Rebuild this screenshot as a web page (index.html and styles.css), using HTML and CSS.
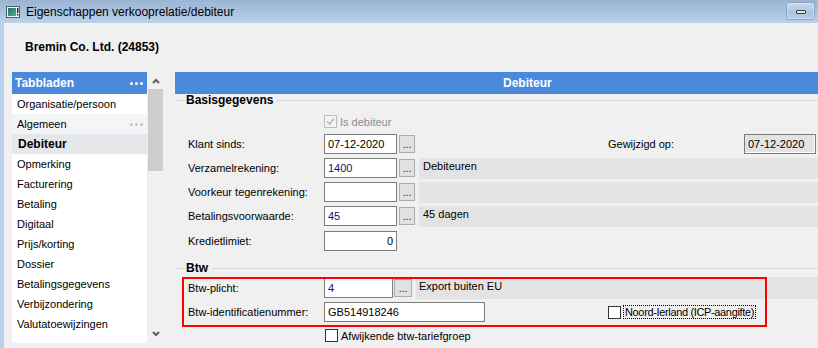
FILE: index.html
```html
<!DOCTYPE html>
<html>
<head>
<meta charset="utf-8">
<link rel="stylesheet" href="styles.css">
</head>
<body>
<div class="titlebar">
  <svg class="appicon" width="14" height="12" viewBox="0 0 14 12">
    <rect x="0.5" y="0.5" width="13" height="11" fill="#f4f4f4" stroke="#5a5a5a"/>
    <rect x="2" y="2" width="8" height="8" fill="url(#g)"/>
    <defs><linearGradient id="g" x1="0" y1="0" x2="1" y2="1"><stop offset="0" stop-color="#1f6e8c"/><stop offset="1" stop-color="#4db36a"/></linearGradient></defs>
    <rect x="11" y="2" width="1.4" height="5" fill="#222"/>
    <rect x="11" y="8" width="1.4" height="1.5" fill="#222"/>
  </svg>
  <span class="title">Eigenschappen verkooprelatie/debiteur</span>
  <div class="minbtn"><span class="minbar"></span></div>
</div>
<div class="client">
  <div class="company">Bremin Co. Ltd. (24853)</div>
  <div class="main">
    <div class="sidebar">
      <div class="sb-head">
        <span>Tabbladen</span>
        <svg class="dots" width="13" height="3" viewBox="0 0 13 3"><circle cx="1.5" cy="1.5" r="1.5" fill="#fff"/><circle cx="6.5" cy="1.5" r="1.5" fill="#fff"/><circle cx="11.5" cy="1.5" r="1.5" fill="#fff"/></svg>
      </div>
      <ul class="tabs">
        <li>Organisatie/persoon</li>
        <li class="hover">Algemeen<svg class="dots" width="13" height="3" viewBox="0 0 13 3"><circle cx="1.5" cy="1.5" r="1.5" fill="#c4c6c9"/><circle cx="6.5" cy="1.5" r="1.5" fill="#c4c6c9"/><circle cx="11.5" cy="1.5" r="1.5" fill="#c4c6c9"/></svg></li>
        <li class="active">Debiteur</li>
        <li>Opmerking</li>
        <li>Facturering</li>
        <li>Betaling</li>
        <li>Digitaal</li>
        <li>Prijs/korting</li>
        <li>Dossier</li>
        <li>Betalingsgegevens</li>
        <li>Verbijzondering</li>
        <li>Valutatoewijzingen</li>
      </ul>
    </div>
    <div class="scroll">
      <svg class="chev up" width="8" height="6" viewBox="0 0 8 6"><polyline points="1,5 4,2 7,5" fill="none" stroke="#5f5f5f" stroke-width="2"/></svg>
      <div class="thumb"></div>
      <svg class="chev down" width="8" height="6" viewBox="0 0 8 6"><polyline points="1,1 4,4 7,1" fill="none" stroke="#5f5f5f" stroke-width="2"/></svg>
    </div>
    <div class="content">
      <div class="content-head">Debiteur</div>
      <div class="group-title"><span>Basisgegevens</span></div>
      <div class="form">
        <div class="row row-check">
          <span class="label"></span>
          <span class="check disabled"><svg width="11" height="11" viewBox="0 0 11 11"><polyline points="2,5.5 4.5,8 9,2.5" fill="none" stroke="#b8b8b8" stroke-width="1.6"/></svg></span>
          <span class="check-text disabled-text">Is debiteur</span>
        </div>
        <div class="row row-klant">
          <span class="label">Klant sinds:</span>
          <span class="input w73">07-12-2020</span>
          <span class="btn">...</span>
          <span class="label label2">Gewijzigd op:</span>
          <span class="input readonly w72">07-12-2020</span>
        </div>
        <div class="row">
          <span class="label">Verzamelrekening:</span>
          <span class="input w73 val">1400</span>
          <span class="btn">...</span>
          <span class="panel">Debiteuren</span>
        </div>
        <div class="row">
          <span class="label">Voorkeur tegenrekening:</span>
          <span class="input w73"></span>
          <span class="btn">...</span>
          <span class="panel"></span>
        </div>
        <div class="row">
          <span class="label">Betalingsvoorwaarde:</span>
          <span class="input w73 val">45</span>
          <span class="btn">...</span>
          <span class="panel">45 dagen</span>
        </div>
        <div class="row row-krediet">
          <span class="label">Kredietlimiet:</span>
          <span class="input w73 right">0</span>
        </div>
      </div>
      <div class="group-title group-btw"><span>Btw</span></div>
      <div class="form">
        <div class="row row-plicht">
          <span class="label">Btw-plicht:</span>
          <span class="input w69 val">4</span>
          <span class="btn btn-wide">...</span>
          <span class="panel panel-tall">Export buiten EU</span>
        </div>
        <div class="row">
          <span class="label">Btw-identificatienummer:</span>
          <span class="input w161">GB514918246</span>
          <span class="check check-ni"></span>
          <span class="focus-text">Noord-Ierland (ICP-aangifte)</span>
        </div>
        <div class="row row-check row-afw">
          <span class="label"></span>
          <span class="check"></span>
          <span class="check-text">Afwijkende btw-tariefgroep</span>
        </div>
      </div>
      <div class="highlight"></div>
    </div>
  </div>
</div>
</body>
</html>
```
FILE: styles.css
```css
html, body {
  margin: 0;
  padding: 0;
}
body {
  width: 818px;
  height: 348px;
  overflow: hidden;
  background: #f0f0f0;
  font-family: "Liberation Sans", Arial, sans-serif;
  font-size: 11px;
  color: #000;
}

/* title bar */
.titlebar {
  height: 23px;
  background: linear-gradient(#9ab4d2, #bad2eb);
  display: flex;
  align-items: center;
  padding-left: 6px;
  box-sizing: border-box;
}
.appicon {
  margin-top: 1px;
  flex: none;
}
.title {
  margin-left: 6px;
  font-size: 12px;
  color: #000;
}
.minbtn {
  margin-left: auto;
  margin-right: 3px;
  align-self: flex-start;
  margin-top: 2px;
  width: 29px;
  height: 18px;
  box-sizing: border-box;
  border: 1px solid #8aa4c4;
  border-radius: 3px;
  background: linear-gradient(#c6d8ee, #b3cae5 50%, #a9c3e1 51%, #b6cde8);
  box-shadow: inset 0 0 0 1px rgba(255,255,255,0.35);
  display: flex;
  justify-content: center;
  align-items: flex-end;
  padding-bottom: 5px;
}
.minbar {
  width: 10px;
  height: 4px;
  box-sizing: border-box;
  border: 1px solid #3c3c3c;
  background: #e4e4e4;
  border-radius: 1px;
}

/* client */
.client {
  height: 325px;
  border-left: 4px solid #b9d0e9;
  box-sizing: border-box;
}
.company {
  font-weight: bold;
  font-size: 12px;
  line-height: 14px;
  height: 49px;
  box-sizing: border-box;
  padding: 17px 0 0 21px;
}
.main {
  display: flex;
  padding-left: 8px;
}

/* sidebar */
.sidebar {
  width: 135px;
  height: 271px;
  background: #fff;
  flex: none;
}
.sb-head {
  height: 22px;
  background: #4a89dc;
  color: #fff;
  font-weight: bold;
  font-size: 12px;
  display: flex;
  align-items: center;
  justify-content: space-between;
  padding: 0 4px 0 3px;
}
.dots {
  display: block;
}
.tabs {
  list-style: none;
  margin: 0;
  padding: 0;
}
.tabs li {
  height: 20px;
  line-height: 20px;
  padding: 0 4px 0 5px;
  display: flex;
  align-items: center;
  justify-content: space-between;
}
.tabs li.hover {
  background: #f4f5f7;
}
.tabs li.active {
  background: #e6e7ea;
  font-weight: bold;
  font-size: 12px;
  padding-left: 6px;
}

/* scrollbar */
.scroll {
  width: 15px;
  margin-left: 1px;
  height: 271px;
  display: flex;
  flex-direction: column;
  align-items: center;
  flex: none;
}
.chev {
  display: block;
}
.chev.up {
  margin-top: 6px;
  margin-left: 1px;
}
.thumb {
  width: 15px;
  height: 82px;
  margin-top: 5px;
  background: #cdcdcd;
}
.chev.down {
  margin-top: auto;
  margin-bottom: 6px;
  margin-left: 1px;
}

/* content */
.content {
  position: relative;
  margin-left: 12px;
  width: 643px;
  height: 276px;
  overflow: hidden;
  flex: none;
}
.content-head {
  height: 22px;
  background: #4a89dc;
  color: #fff;
  font-weight: bold;
  font-size: 12px;
  line-height: 22px;
  padding-left: 328px;
  width: 702px;
}
.group-title {
  height: 13px;
  display: flex;
  align-items: center;
  font-weight: bold;
  font-size: 12px;
  line-height: 13px;
}
.group-title::before {
  content: "";
  width: 9px;
  height: 1px;
  background: #d8d8d8;
  margin-left: 1px;
}
.group-title::after {
  content: "";
  flex: 1;
  height: 1px;
  background: #d8d8d8;
  margin-left: 4px;
}
.group-title span {
  padding-left: 1px;
}
.group-btw {
  margin-top: 11px;
}
.form {
  padding-left: 13px;
  display: flex;
  flex-direction: column;
  gap: 4px;
}
.row {
  display: flex;
  align-items: center;
  height: 20px;
}
.label {
  width: 136px;
  flex: none;
}
.label2 {
  margin-left: 193px;
}
.input {
  height: 20px;
  box-sizing: border-box;
  border: 1px solid #7d7d7d;
  background: #fff;
  padding: 0 3px;
  line-height: 18px;
  white-space: nowrap;
  flex: none;
}
.input.val {
  color: #14125e;
}
.input.right {
  text-align: right;
}
.input.readonly {
  background: #e3e3e3;
  border-color: #7a7a7a;
  box-shadow: inset -1px -1px 0 #fff;
}
.w73 { width: 73px; }
.w72 { width: 72px; }
.w69 { width: 69px; }
.w161 { width: 161px; }
.btn {
  width: 16px;
  height: 18px;
  box-sizing: border-box;
  margin-left: 2px;
  align-self: flex-start;
  margin-top: 1px;
  border: 1px solid #adadad;
  background: #e1e1e1;
  font-size: 10px;
  line-height: 10px;
  display: flex;
  justify-content: center;
  align-items: flex-end;
  padding-bottom: 2px;
  flex: none;
}
.btn-wide {
  width: 18px;
  margin-left: 1px;
}
.panel {
  flex: 1;
  height: 21px;
  margin-left: 4px;
  background: #e3e3e3;
  padding-left: 4px;
  line-height: 17px;
  align-self: flex-start;
}
.panel-tall {
  height: 22px;
  margin-top: -1px;
  padding-left: 3px;
  line-height: 19px;
}
.row-check {
  height: 13px;
  margin-top: 8px;
}
.row-klant {
  margin-top: 2px;
}
.row-krediet {
  margin-top: 1px;
}
.row-plicht {
  margin-top: 3px;
}
.row-afw {
  margin-top: 3px;
}
.check {
  width: 13px;
  height: 13px;
  box-sizing: border-box;
  border: 1px solid #333;
  background: #fff;
  flex: none;
  display: flex;
  align-items: center;
  justify-content: center;
}
.check.disabled {
  border-color: #bcbcbc;
  background: #f4f4f4;
}
.row-afw .check {
  margin-left: 1px;
}
.check-text {
  margin-left: 3px;
}
.disabled-text {
  color: #8d8d8d;
}
.check-ni {
  margin-left: 123px;
}
.focus-text {
  margin-left: 2px;
  border: 1px dotted #000;
  padding: 0 1px;
  line-height: 12px;
  letter-spacing: -0.35px;
}
.highlight {
  position: absolute;
  left: 7px;
  top: 205px;
  width: 585px;
  height: 50px;
  box-sizing: border-box;
  border: 2px solid #ff0000;
}
```
